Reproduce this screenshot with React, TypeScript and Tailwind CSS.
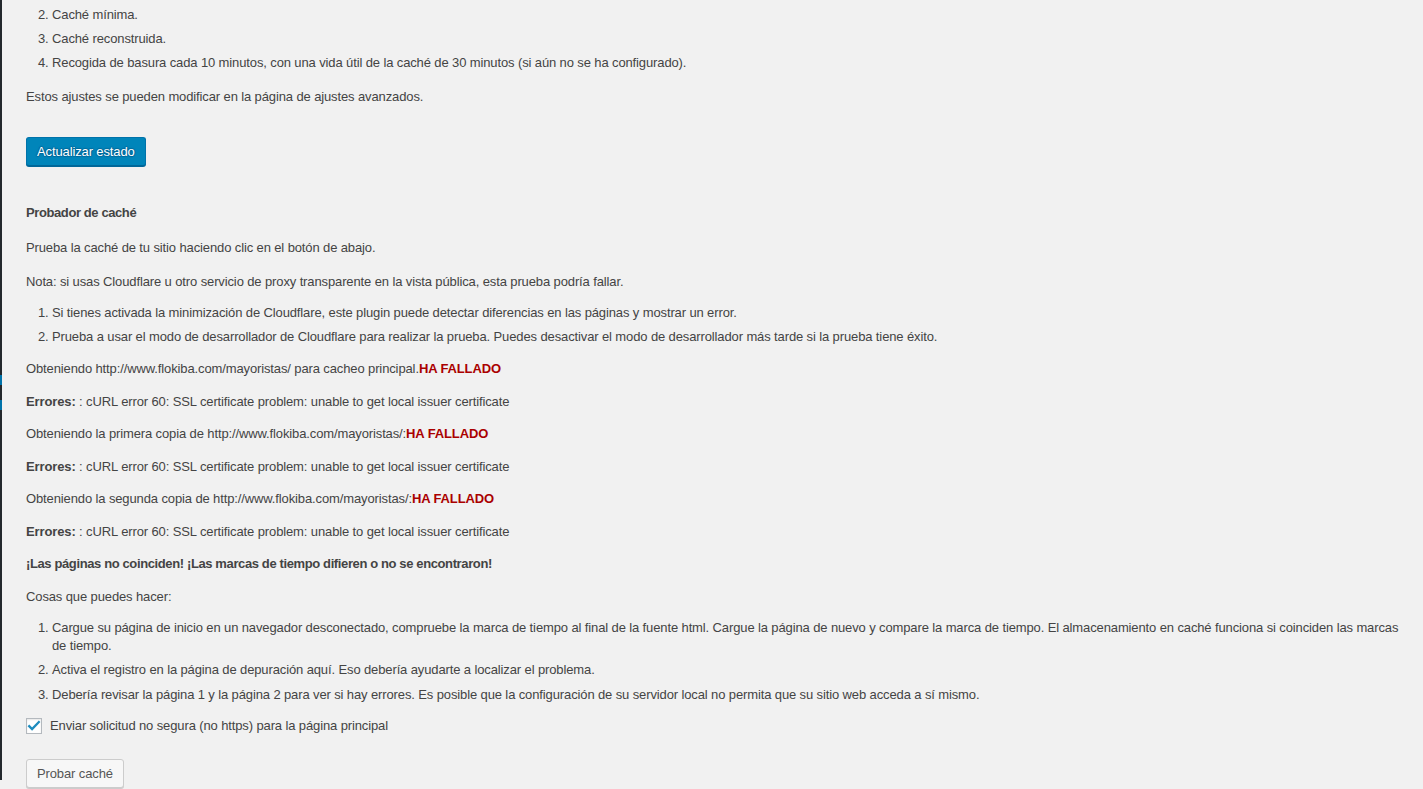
import React from 'react';

const Failed: React.FC = () => (
  <strong className="font-bold text-[#aa0000]">HA FALLADO</strong>
);

const ErrorLine: React.FC = () => (
  <p className="mt-[13px] leading-[19.5px]">
    <strong className="font-bold">Errores:</strong> : cURL error 60: SSL certificate problem: unable to get local issuer certificate
  </p>
);

const App: React.FC = () => {
  return (
    <div className="flex min-h-[789px] w-full bg-[#f1f1f1] font-['Liberation_Sans',Arial,sans-serif] text-[13px] tracking-[-0.12px] text-[#444]">
      {/* Admin menu edge */}
      <div className="flex w-[2px] shrink-0 flex-col">
        <div className="h-[375px] bg-[#23282d]" />
        <div className="h-[10px] bg-[#0073aa]" />
        <div className="h-[15px] bg-[#23282d]" />
        <div className="h-[10px] bg-[#0073aa]" />
        <div className="h-[370px] bg-[#23282d]" />
      </div>

      <div className="flex min-w-0 flex-1 flex-col pl-[24px] pr-[12px] pt-[6px]">
        {/* Preset list */}
        <ol start={2} className="list-decimal pl-[26px] leading-[18.2px]">
          <li>Caché mínima.</li>
          <li className="mt-[6px]">Caché reconstruida.</li>
          <li className="mt-[6px]">
            Recogida de basura cada 10 minutos, con una vida útil de la caché de 30 minutos (si aún no se ha configurado).
          </li>
        </ol>

        <p className="mt-[14px] leading-[19.5px]">
          Estos ajustes se pueden modificar en la página de ajustes avanzados.
        </p>

        <div className="mt-[31px]">
          <button className="h-[29px] rounded-[3px] border border-[#0073aa] border-b-[#006799] bg-[#0085ba] px-[10px] text-[13px] leading-[26px] text-white shadow-[0_1px_0_#006799] [text-shadow:0_-1px_1px_#006799,1px_0_1px_#006799,0_1px_1px_#006799,-1px_0_1px_#006799]">
            Actualizar estado
          </button>
        </div>

        {/* Cache tester */}
        <h4 className="mt-[37px] font-bold leading-[19.5px] tracking-[-0.4px]">Probador de caché</h4>

        <p className="mt-[15px] leading-[19.5px]">
          Prueba la caché de tu sitio haciendo clic en el botón de abajo.
        </p>
        <p className="mt-[15px] leading-[19.5px]">
          Nota: si usas Cloudflare u otro servicio de proxy transparente en la vista pública, esta prueba podría fallar.
        </p>

        <ol className="mt-[12px] list-decimal pl-[26px] leading-[18.2px]">
          <li>
            Si tienes activada la minimización de Cloudflare, este plugin puede detectar diferencias en las páginas y mostrar un error.
          </li>
          <li className="mt-[6px]">
            Prueba a usar el modo de desarrollador de Cloudflare para realizar la prueba. Puedes desactivar el modo de desarrollador más tarde si la prueba tiene éxito.
          </li>
        </ol>

        <p className="mt-[13px] leading-[19.5px]">
          Obteniendo http://www.flokiba.com/mayoristas/ para cacheo principal.<Failed />
        </p>
        <ErrorLine />
        <p className="mt-[13px] leading-[19.5px]">
          Obteniendo la primera copia de http://www.flokiba.com/mayoristas/:<Failed />
        </p>
        <ErrorLine />
        <p className="mt-[13px] leading-[19.5px]">
          Obteniendo la segunda copia de http://www.flokiba.com/mayoristas/:<Failed />
        </p>
        <ErrorLine />

        <p className="mt-[13px] font-bold leading-[19.5px] tracking-[-0.38px]">
          ¡Las páginas no coinciden! ¡Las marcas de tiempo difieren o no se encontraron!
        </p>

        <p className="mt-[13px] leading-[19.5px]">Cosas que puedes hacer:</p>

        <ol className="mt-[13px] list-decimal pl-[26px] leading-[18.2px]">
          <li>
            Cargue su página de inicio en un navegador desconectado, compruebe la marca de tiempo al final de la fuente html. Cargue la página de nuevo y compare la marca de tiempo. El almacenamiento en caché funciona si coinciden las marcas de tiempo.
          </li>
          <li className="mt-[6px]">
            Activa el registro en la página de depuración aquí. Eso debería ayudarte a localizar el problema.
          </li>
          <li className="mt-[6px]">
            Debería revisar la página 1 y la página 2 para ver si hay errores. Es posible que la configuración de su servidor local no permita que su sitio web acceda a sí mismo.
          </li>
        </ol>

        {/* Plain http option */}
        <label className="mt-[12px] flex items-center gap-[8px] leading-[19.5px]">
          <span className="flex h-[16px] w-[16px] items-center justify-center border border-[#b4b9be] bg-white shadow-[inset_0_1px_2px_rgba(0,0,0,0.1)]">
            <svg viewBox="0 0 16 16" className="h-[14px] w-[14px]" fill="none">
              <path d="M2.5 8.2l3.3 3.3L13.5 3.5" stroke="#1e8cbe" strokeWidth={2.6} strokeLinecap="square" strokeLinejoin="miter" />
            </svg>
          </span>
          <span>Enviar solicitud no segura (no https) para la página principal</span>
        </label>

        <div className="mt-[24px]">
          <button className="h-[29px] rounded-[3px] border border-[#cccccc] bg-[#f7f7f7] px-[10px] text-[13px] leading-[26px] text-[#555] shadow-[0_1px_0_#cccccc]">
            Probar caché
          </button>
        </div>
      </div>
    </div>
  );
};

export default App;
